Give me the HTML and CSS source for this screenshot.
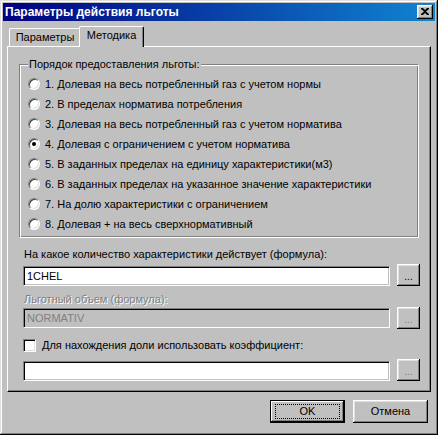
FILE: index.html
```html
<!DOCTYPE html>
<html lang="ru">
<head>
<meta charset="utf-8">
<title>Параметры действия льготы</title>
<link rel="stylesheet" href="styles.css">
</head>
<body>
<div class="window">
  <div class="titlebar">
    <span class="title">Параметры действия льготы</span>
    <div class="close"><svg width="8" height="7" viewBox="0 0 8 7"><path d="M0 0h2l2 2 2-2h2v1L5 3.5 8 6v1H6L4 5 2 7H0V6l3-2.5L0 1z" fill="#000"/></svg></div>
  </div>
  <div class="tabctl">
    <div class="tabstrip">
      <div class="tab">Параметры</div>
      <div class="tab active">Методика</div>
    </div>
    <div class="panel">
      <fieldset class="group">
        <legend>Порядок предоставления льготы:</legend>
        <div class="radio"><span class="rb"></span><span>1. Долевая на весь потребленный газ с учетом нормы</span></div>
        <div class="radio"><span class="rb"></span><span>2. В пределах норматива потребления</span></div>
        <div class="radio"><span class="rb"></span><span>3. Долевая на весь потребленный газ с учетом норматива</span></div>
        <div class="radio"><span class="rb checked"></span><span>4. Долевая с ограничением с учетом норматива</span></div>
        <div class="radio"><span class="rb"></span><span>5. В заданных пределах на единицу характеристики(м3)</span></div>
        <div class="radio"><span class="rb"></span><span>6. В заданных пределах на указанное значение характеристики</span></div>
        <div class="radio"><span class="rb"></span><span>7. На долю характеристики с ограничением</span></div>
        <div class="radio"><span class="rb"></span><span>8. Долевая + на весь сверхнормативный</span></div>
      </fieldset>
      <div class="label first">На какое количество характеристики действует (формула):</div>
      <div class="row r1"><div class="field">1CHEL</div><div class="btn dots">...</div></div>
      <div class="label disabled second">Льготный объем (формула):</div>
      <div class="row r2 mid"><div class="field off">NORMATIV</div><div class="btn dots disabled">...</div></div>
      <div class="check"><span class="cb"></span><span>Для нахождения доли использовать коэффициент:</span></div>
      <div class="row r3"><div class="field"></div><div class="btn dots disabled">...</div></div>
    </div>
  </div>
  <div class="footer">
    <div class="btn push default"><span class="focus">OK</span></div>
    <div class="btn push">Отмена</div>
  </div>
</div>
</body>
</html>
```
FILE: styles.css
```css
* { box-sizing: border-box; }
html, body { margin: 0; padding: 0; background: #c0c0c0; }
body {
  font-family: "Liberation Sans", Arial, sans-serif;
  font-size: 11px;
  line-height: 13px;
  color: #000;
}
.window {
  width: 438px;
  height: 435px;
  padding: 3px;
  background: #c0c0c0;
  box-shadow: inset -1px -1px #000, inset 1px 1px #dfdfdf, inset -2px -2px #808080, inset 2px 2px #fff;
}
.titlebar {
  height: 18px;
  display: flex;
  align-items: center;
  justify-content: space-between;
  background: linear-gradient(90deg, #000080, #1084d0);
  padding: 0 2px 0 2px;
}
.title {
  color: #fff;
  font-weight: bold;
  font-size: 12px;
  letter-spacing: 0;
}
.close {
  width: 16px;
  height: 14px;
  background: #c0c0c0;
  box-shadow: inset -1px -1px #000, inset 1px 1px #fff, inset -2px -2px #808080, inset 2px 2px #dfdfdf;
  display: flex;
  align-items: center;
  justify-content: center;
  padding: 0 1px 1px 0;
}
.close svg { display: block; }
.tabctl {
  margin: 5px 4px 0 4px;
}
.tabstrip {
  height: 20px;
  display: flex;
  align-items: flex-end;
  padding-left: 2px;
}
.tab {
  height: 18px;
  background: #c0c0c0;
  border-top: 1px solid #fff;
  border-left: 1px solid #fff;
  border-right: 1px solid #000;
  border-radius: 2px 2px 0 0;
  box-shadow: inset -1px 0 #808080;
  display: flex;
  align-items: center;
  justify-content: center;
  padding-bottom: 1px;
}
.tab:first-child { width: 72px; }
.tab.active {
  width: 65px;
  height: 21px;
  margin-left: -2px;
  margin-bottom: -1px;
  position: relative;
  z-index: 1;
  padding-bottom: 3px;
}
.panel {
  height: 346px;
  border-top: 1px solid #fff;
  border-left: 1px solid #fff;
  border-right: 1px solid #000;
  border-bottom: 1px solid #000;
  box-shadow: inset -1px -1px #808080;
  padding: 0 0 0 15px;
}
.group {
  width: 400px;
  margin: 11px 0 0 -4px;
  padding: 3px 0 3px 8px;
  border: 1px solid;
  border-color: #808080 #fff #fff #808080;
  box-shadow: inset 1px 1px #fff, inset -1px -1px #808080;
}
.group legend {
  padding: 0 1px;
  margin: 0;
  background: #c0c0c0;
  line-height: 13px;
}
.radio {
  height: 20px;
  display: flex;
  align-items: center;
}
.rb {
  width: 12px;
  height: 12px;
  border-radius: 50%;
  background: #fff;
  border: 1px solid;
  border-color: #808080 #fff #fff #808080;
  box-shadow: inset 1px 1px #404040, inset -1px -1px #dfdfdf;
  margin-right: 5px;
  display: flex;
  align-items: center;
  justify-content: center;
  flex: none;
}
.rb.checked::after {
  content: "";
  width: 4px;
  height: 4px;
  border-radius: 50%;
  background: #000;
}
.label { padding-left: 1px; height: 13px; }
.label.first { margin-top: 10px; }
.label.second { margin-top: 7px; }
.disabled { color: #808080; text-shadow: 1px 1px #fff; }
.row {
  display: flex;
  align-items: flex-end;
  gap: 7px;
  height: 22px;
}
.row.mid { align-items: center; }
.r1 { margin-top: 3px; }
.r2 { margin-top: 1px; }
.r3 { margin-top: 7px; }
.field {
  width: 367px;
  height: 20px;
  background: #fff;
  border: 1px solid;
  border-color: #808080 #fff #fff #808080;
  box-shadow: inset 1px 1px #000, inset -1px -1px #c0c0c0;
  padding: 3px 3px 0 3px;
  line-height: 13px;
}
.field.off { background: #c0c0c0; color: #808080; }
.btn {
  background: #c0c0c0;
  box-shadow: inset -1px -1px #000, inset 1px 1px #fff, inset -2px -2px #808080, inset 2px 2px #dfdfdf;
  display: flex;
  align-items: center;
  justify-content: center;
}
.dots {
  width: 23px;
  height: 22px;
  padding-top: 2px;
  font-size: 10px;
}
.dots.disabled { text-shadow: none; }
.check {
  margin-top: 10px;
  height: 13px;
  display: flex;
  align-items: center;
}
.cb {
  width: 13px;
  height: 13px;
  background: #fff;
  border: 1px solid;
  border-color: #808080 #fff #fff #808080;
  box-shadow: inset 1px 1px #000, inset -1px -1px #dfdfdf;
  margin-right: 6px;
  flex: none;
}
.footer {
  margin-top: 8px;
  display: flex;
  justify-content: flex-end;
  gap: 8px;
  padding-right: 7px;
}
.push {
  width: 75px;
  height: 23px;
}
.push.default {
  border: 1px solid #000;
  box-shadow: inset -1px -1px #000, inset 1px 1px #fff, inset -2px -2px #808080;
}
.focus {
  width: 65px;
  height: 15px;
  border: 1px dotted #000;
  display: flex;
  align-items: center;
  justify-content: center;
}
```
